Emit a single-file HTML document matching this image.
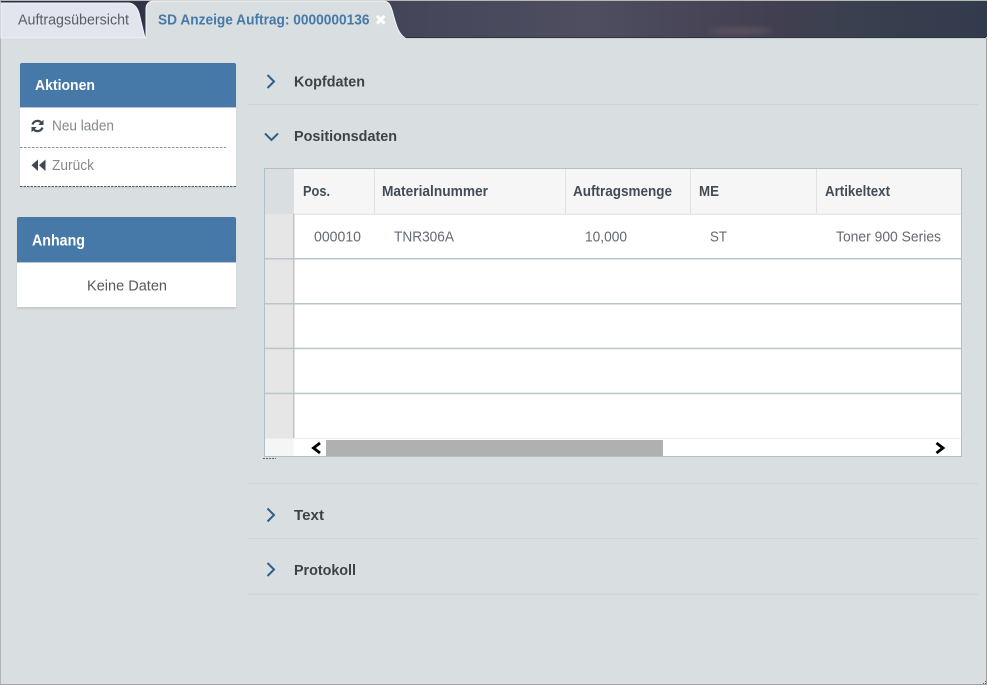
<!DOCTYPE html>
<html lang="de"><head><meta charset="utf-8"><title>SD Anzeige Auftrag</title>
<style>html,body{margin:0;padding:0;width:987px;height:685px;overflow:hidden;background:#d9dfe1}svg{display:block;font-family:"Liberation Sans",sans-serif}</style>
</head><body>
<svg width="987" height="685" viewBox="0 0 987 685" xmlns="http://www.w3.org/2000/svg">
<defs>
<linearGradient id="sky" x1="0" x2="1" y1="0" y2="0">
<stop offset="0" stop-color="#2b2f44"/><stop offset=".2" stop-color="#32354a"/><stop offset=".42" stop-color="#45465a"/><stop offset=".6" stop-color="#4e4e60"/><stop offset=".78" stop-color="#423f50"/><stop offset=".88" stop-color="#38404f"/><stop offset="1" stop-color="#323a4d"/>
</linearGradient>
<filter id="blur" x="-30%" y="-100%" width="160%" height="300%"><feGaussianBlur stdDeviation="3"/></filter>
<filter id="soft" x="-5%" y="-5%" width="110%" height="110%"><feGaussianBlur stdDeviation=".9"/></filter>
</defs>
<rect width="987" height="685" fill="#d9dfe1"/>
<rect x="0" y="0" width="987" height="1" fill="#b8b8b0"/>
<rect x="0" y="1" width="987" height="36" fill="url(#sky)"/>
<ellipse cx="740" cy="31" rx="32" ry="3" fill="#5f5460" filter="url(#blur)"/>
<rect x="0" y="37" width="986" height="1" fill="#2f3442"/>
<rect x="0" y="38" width="986" height="1" fill="#c7ced1"/>
<rect x="0" y="0" width="1" height="685" fill="#aeb4b7"/>
<rect x="986" y="38" width="1" height="647" fill="#9ba1a4"/>
<rect x="0" y="684" width="987" height="1" fill="#9da3a6"/>
<path d="M1 38V3H128C134 3 137 7 139 13L145 38Z" fill="#e2e5ee" stroke="#f4f5f8"/>
<path d="M145 38C146 38 146 36 146 34V9C146 4 149 1 154 1H383C388 1 390 4 392 10C395 20 397 33 405 38Z" fill="#d9dfe1" stroke="#f4f6f7" stroke-width="1"/>
<rect x="146" y="36" width="258" height="4" fill="#d9dfe1"/>
<text x="18" y="24.500" font-size="15" fill="#565d67" textLength="111" lengthAdjust="spacingAndGlyphs">Auftragsübersicht</text>
<text x="158" y="24.500" font-size="15" font-weight="700" fill="#4679a8" textLength="211.500" lengthAdjust="spacingAndGlyphs">SD Anzeige Auftrag: 0000000136</text>
<path d="M377 16L384.500 23.500M384.500 16L377 23.500" stroke="#fff" stroke-width="3"/>

<!-- Aktionen -->
<rect x="20" y="64" width="216" height="124" fill="#aab2b6" opacity=".35" filter="url(#soft)"/>
<path d="M20 107V65Q20 63 22 63H234Q236 63 236 65V107Z" fill="#4679a8"/>
<rect x="20" y="107" width="216" height="80" fill="#fff"/>
<rect x="20" y="107" width="216" height="1" fill="#b9c6d0"/>
<text x="35" y="90" font-size="15" font-weight="700" fill="#fff" textLength="60" lengthAdjust="spacingAndGlyphs">Aktionen</text>
<path d="M32.500 124.500A5.300 5.300 0 0 1 41.600 122.800M42.500 127.500A5.300 5.300 0 0 1 33.400 129.200" fill="none" stroke="#3f4952" stroke-width="2.200"/>
<path d="M43.500 119.800V125H38.300ZM31.500 132.200V127H36.700Z" fill="#3f4952"/>
<text x="52" y="130.500" font-size="15" fill="#83898f" textLength="62" lengthAdjust="spacingAndGlyphs">Neu laden</text>
<path d="M20 147.500H226" stroke="#8a8c8d" stroke-dasharray="2.500 1.500"/>
<path d="M38 159.500V171L31.500 165.200ZM45.500 159.500V171L39 165.200Z" fill="#3f4952"/>
<text x="52" y="170" font-size="15" fill="#83898f" textLength="42" lengthAdjust="spacingAndGlyphs">Zurück</text>
<path d="M20 186.500H236" stroke="#55585a" stroke-dasharray="2.500 1"/>

<!-- Anhang -->
<rect x="17" y="218" width="219" height="91" fill="#aab2b6" opacity=".45" filter="url(#soft)"/>
<path d="M17 262V219Q17 217 19 217H234Q236 217 236 219V262Z" fill="#4679a8"/>
<rect x="17" y="262" width="219" height="45" fill="#fff"/>
<rect x="17" y="262" width="219" height="1" fill="#b9c6d0"/>
<text x="32" y="245.500" font-size="16" font-weight="700" fill="#fff" textLength="53" lengthAdjust="spacingAndGlyphs">Anhang</text>
<text x="87" y="290.500" font-size="15" fill="#55595d" textLength="80" lengthAdjust="spacingAndGlyphs">Keine Daten</text>

<!-- Sections -->
<path d="M267.500 75L274 81.500L267.500 88" fill="none" stroke="#2f6089" stroke-width="2"/>
<text x="294" y="86.500" font-size="15" font-weight="700" fill="#3d4246" textLength="71" lengthAdjust="spacingAndGlyphs">Kopfdaten</text>
<rect x="248" y="104" width="730" height="1" fill="#cdd3d6"/>
<path d="M265 133.500L271.500 140L278 133.500" fill="none" stroke="#2f6089" stroke-width="2"/>
<text x="294" y="141" font-size="15" font-weight="700" fill="#3d4246" textLength="103" lengthAdjust="spacingAndGlyphs">Positionsdaten</text>

<!-- Table -->
<rect x="264.500" y="168.500" width="697" height="288" fill="#fff" stroke="#b1bfc8"/>
<rect x="265" y="169" width="29" height="45" fill="#d9dfe1"/>
<rect x="294" y="169" width="667" height="45" fill="#f6f6f6"/>
<rect x="294" y="213.500" width="667" height="1.500" fill="#e6e8e9"/>
<rect x="374" y="169" width="1" height="45" fill="#e0e2e3"/>
<rect x="565" y="169" width="1" height="45" fill="#e0e2e3"/>
<rect x="690" y="169" width="1" height="45" fill="#e0e2e3"/>
<rect x="816" y="169" width="1" height="45" fill="#e0e2e3"/>
<rect x="265" y="214" width="29" height="224" fill="#e6e6e6"/>
<rect x="293" y="214" width="1.500" height="224" fill="#bcc5cb"/>
<rect x="265" y="258" width="696" height="1.500" fill="#bac6cd"/>
<rect x="265" y="303" width="696" height="1.500" fill="#bac6cd"/>
<rect x="265" y="347.700" width="696" height="1.500" fill="#bac6cd"/>
<rect x="265" y="392.700" width="696" height="1.500" fill="#bac6cd"/>
<rect x="265" y="438" width="696" height="1" fill="#ececec"/>
<rect x="265" y="439" width="29" height="17" fill="#f5f5f5"/>
<g font-size="15" font-weight="700" fill="#434c56">
<text x="303" y="196" textLength="27" lengthAdjust="spacingAndGlyphs">Pos.</text>
<text x="382" y="196" textLength="106" lengthAdjust="spacingAndGlyphs">Materialnummer</text>
<text x="573" y="196" textLength="99" lengthAdjust="spacingAndGlyphs">Auftragsmenge</text>
<text x="699" y="196" textLength="20" lengthAdjust="spacingAndGlyphs">ME</text>
<text x="825" y="196" textLength="65" lengthAdjust="spacingAndGlyphs">Artikeltext</text>
</g>
<g font-size="15" fill="#646b73">
<text x="314" y="241.500" textLength="47" lengthAdjust="spacingAndGlyphs">000010</text>
<text x="394" y="241.500" textLength="60" lengthAdjust="spacingAndGlyphs">TNR306A</text>
<text x="585" y="241.500" textLength="42" lengthAdjust="spacingAndGlyphs">10,000</text>
<text x="710" y="241.500" textLength="17" lengthAdjust="spacingAndGlyphs">ST</text>
<text x="836" y="241.500" textLength="105" lengthAdjust="spacingAndGlyphs">Toner 900 Series</text>
</g>
<rect x="326" y="440" width="337" height="16" fill="#b0b0b0"/>
<path d="M320 443L313.500 448L320 453" fill="none" stroke="#000" stroke-width="2.800"/>
<path d="M936.500 443L943 448L936.500 453" fill="none" stroke="#000" stroke-width="2.800"/>
<path d="M263 458.500H276" stroke="#666" stroke-dasharray="2 1"/>

<rect x="248" y="483" width="730" height="1" fill="#cdd3d6"/>
<path d="M267.500 508.500L274 515L267.500 521.500" fill="none" stroke="#2f6089" stroke-width="2"/>
<text x="294" y="520" font-size="15" font-weight="700" fill="#3d4246" textLength="30" lengthAdjust="spacingAndGlyphs">Text</text>
<rect x="248" y="538" width="730" height="1" fill="#cdd3d6"/>
<path d="M267.500 563L274 569.500L267.500 576" fill="none" stroke="#2f6089" stroke-width="2"/>
<text x="294" y="575" font-size="15" font-weight="700" fill="#3d4246" textLength="62" lengthAdjust="spacingAndGlyphs">Protokoll</text>
<rect x="248" y="593.500" width="730" height="1.200" fill="#cdd3d6"/>
<path d="M985 681h1v1h-1zM983 683h1v1h-1zM985 683h1v1h-1z" fill="#555"/>
</svg>
</body></html>
